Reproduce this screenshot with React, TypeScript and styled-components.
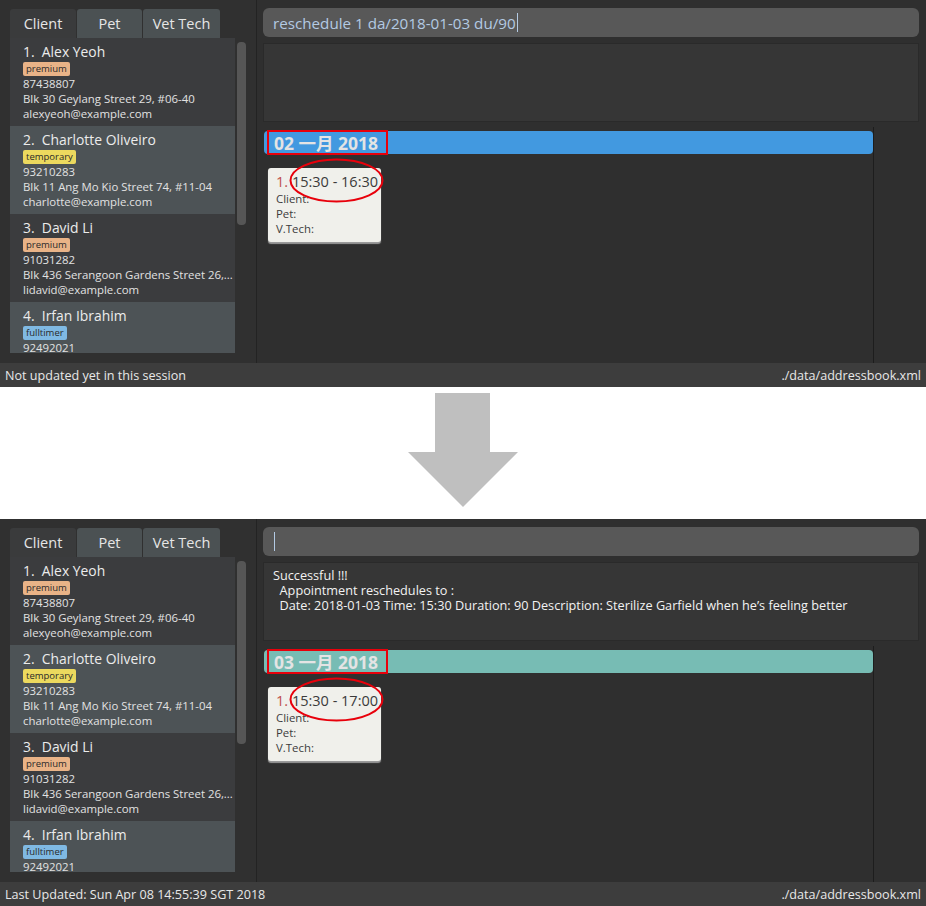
import React from "react";
import styled, { createGlobalStyle } from "styled-components";

const Global = createGlobalStyle`
  html, body { margin: 0; padding: 0; background: #ffffff; }
  body { width: 926px; height: 906px; overflow: hidden; font-family: "Open Sans", "Noto Sans CJK SC", sans-serif; }
`;

const Page = styled.div`
  width: 926px;
  display: flex;
  flex-direction: column;
`;

const Window = styled.div`
  height: 387px;
  display: flex;
  flex-direction: column;
  background: #303030;
`;

const Main = styled.div`
  flex: 1;
  display: flex;
  min-height: 0;
`;

const LeftPane = styled.div`
  width: 257px;
  border-right: 1px solid #232323;
  padding: 9px 0 10px 10px;
  box-sizing: border-box;
  display: flex;
  flex-direction: column;
  background: #303030;
`;

const Tabs = styled.div`
  height: 29px;
  display: flex;
  gap: 1px;
`;

const Tab = styled.div<{ $w: number; $active?: boolean }>`
  width: ${(p) => p.$w}px;
  background: ${(p) => (p.$active ? "#3a3b3c" : "#4b5153")};
  border-radius: 3px 3px 0 0;
  color: #e6e6e6;
  font-size: 14.5px;
  display: flex;
  align-items: center;
  justify-content: center;
`;

const ListRow = styled.div`
  flex: 1;
  display: flex;
  min-height: 0;
`;

const List = styled.div`
  width: 225px;
  overflow: hidden;
  display: flex;
  flex-direction: column;
`;

const Track = styled.div`
  width: 11px;
  padding: 4px 0 0 2px;
  box-sizing: border-box;
`;

const Thumb = styled.div`
  width: 9px;
  height: 183px;
  background: #565656;
  border-radius: 4px;
`;

const Item = styled.div<{ $odd: boolean }>`
  height: 88px;
  flex: none;
  box-sizing: border-box;
  padding: 4px 0 0 13px;
  background: ${(p) => (p.$odd ? "#4d5356" : "#3b3c3e")};
  color: #e2e2e2;
  overflow: hidden;
`;

const Name = styled.div`
  font-size: 13.9px;
  line-height: 19px;
  color: #ececec;
  white-space: pre;
`;

const TagRow = styled.div`
  display: flex;
  margin-top: 1px;
`;

const Tag = styled.span<{ $bg: string }>`
  background: ${(p) => p.$bg};
  color: #2a2a2a;
  font-size: 9.5px;
  line-height: 14px;
  padding: 0 3px;
  border-radius: 2px;
`;

const Detail = styled.div`
  font-size: 11.4px;
  line-height: 15px;
  white-space: nowrap;
  overflow: hidden;
`;

const RightPane = styled.div`
  flex: 1;
  display: flex;
  flex-direction: column;
  padding: 8px 7px 0 6px;
  background: #2f2f2f;
  min-width: 0;
`;

const Command = styled.div`
  height: 29px;
  background: #585858;
  border-radius: 6px;
  display: flex;
  align-items: center;
  padding-left: 10px;
  color: #b3cae3;
  font-size: 15.2px;
`;

const Caret = styled.span`
  display: inline-block;
  width: 1px;
  height: 19px;
  background: #b3cae3;
  margin-left: 1px;
`;

const Result = styled.div`
  margin-top: 6px;
  height: 79px;
  box-sizing: border-box;
  background: #363636;
  border: 1px solid #2a2a2a;
  padding: 5px 9px;
  color: #f2f2f2;
  font-size: 12.7px;
  line-height: 15px;
  white-space: pre;
`;

const Calendar = styled.div`
  position: relative;
  margin-top: 5px;
  width: 611px;
  flex: 1;
  border-right: 1px solid #1d1d1d;
  padding-top: 4px;
  box-sizing: border-box;
`;

const DayHeader = styled.div<{ $bg: string }>`
  margin-left: 1px;
  height: 23px;
  background: ${(p) => p.$bg};
  border-radius: 4px;
  display: flex;
  align-items: center;
  padding-left: 10px;
  color: #e4e4e4;
  font-family: "Open Sans", "Noto Sans CJK SC", sans-serif;
  font-weight: 700;
  font-size: 17.5px;
`;

const Card = styled.div`
  margin: 14px 0 0 5px;
  width: 113px;
  height: 74px;
  box-sizing: border-box;
  background: #f0f0eb;
  border-radius: 3px;
  box-shadow: 0 2px 1px #9a9a9a;
  padding: 4px 0 0 8px;
  color: #3a3a3a;
`;

const CardTitle = styled.div`
  font-size: 14.5px;
  line-height: 19px;
  white-space: pre;
`;

const Num = styled.span`
  color: #c0504d;
`;

const CardLine = styled.div`
  font-size: 11.4px;
  line-height: 15px;
  color: #3c3c3c;
`;

const RedRect = styled.div`
  position: absolute;
  left: 4px;
  top: 3px;
  width: 121px;
  height: 25px;
  box-sizing: border-box;
  border: 2px solid #e8000b;
`;

const RedEllipse = styled.svg`
  position: absolute;
  left: 26px;
  top: 31px;
`;

const StatusBar = styled.div`
  height: 24px;
  flex: none;
  background: #3d3d3d;
  display: flex;
  align-items: center;
  justify-content: space-between;
  padding: 0 5px 0 5px;
  color: #e8e8e8;
  font-size: 12.6px;
`;

const ArrowSection = styled.div`
  height: 132px;
  background: #ffffff;
  display: flex;
  justify-content: center;
  padding-top: 6px;
  box-sizing: border-box;
`;

type Person = {
  n: string;
  tag: string;
  bg: string;
  lines: string[];
};

const people: Person[] = [
  { n: "1.  Alex Yeoh", tag: "premium", bg: "#e9b387", lines: ["87438807", "Blk 30 Geylang Street 29, #06-40", "alexyeoh@example.com"] },
  { n: "2.  Charlotte Oliveiro", tag: "temporary", bg: "#ecd95e", lines: ["93210283", "Blk 11 Ang Mo Kio Street 74, #11-04", "charlotte@example.com"] },
  { n: "3.  David Li", tag: "premium", bg: "#e9b387", lines: ["91031282", "Blk 436 Serangoon Gardens Street 26,...", "lidavid@example.com"] },
  { n: "4.  Irfan Ibrahim", tag: "fulltimer", bg: "#7fb9e3", lines: ["92492021"] },
];

type Props = {
  command: string;
  result: string;
  date: string;
  headerBg: string;
  time: string;
  status: string;
};

function Screen(p: Props) {
  return (
    <Window>
      <Main>
        <LeftPane>
          <Tabs>
            <Tab $w={66} $active>Client</Tab>
            <Tab $w={65}>Pet</Tab>
            <Tab $w={77}>Vet Tech</Tab>
          </Tabs>
          <ListRow>
            <List>
              {people.map((q, i) => (
                <Item key={i} $odd={i % 2 === 1}>
                  <Name>{q.n}</Name>
                  <TagRow>
                    <Tag $bg={q.bg}>{q.tag}</Tag>
                  </TagRow>
                  {q.lines.map((l, j) => (
                    <Detail key={j}>{l}</Detail>
                  ))}
                </Item>
              ))}
            </List>
            <Track>
              <Thumb />
            </Track>
          </ListRow>
        </LeftPane>
        <RightPane>
          <Command>
            {p.command}
            <Caret />
          </Command>
          <Result>{p.result}</Result>
          <Calendar>
            <DayHeader $bg={p.headerBg}>{p.date}</DayHeader>
            <Card>
              <CardTitle>
                <Num>1.</Num> {p.time}
              </CardTitle>
              <CardLine>Client:</CardLine>
              <CardLine>Pet:</CardLine>
              <CardLine>V.Tech:</CardLine>
            </Card>
            <RedRect />
            <RedEllipse width="95" height="45" viewBox="0 0 95 45">
              <ellipse cx="47.5" cy="22.5" rx="46" ry="21" fill="none" stroke="#e8000b" strokeWidth="2" />
            </RedEllipse>
          </Calendar>
        </RightPane>
      </Main>
      <StatusBar>
        <span>{p.status}</span>
        <span>./data/addressbook.xml</span>
      </StatusBar>
    </Window>
  );
}

export default function App() {
  return (
    <Page>
      <Global />
      <Screen
        command="reschedule 1 da/2018-01-03 du/90"
        result=""
        date="02 一月 2018"
        headerBg="#4299e0"
        time="15:30 - 16:30"
        status="Not updated yet in this session"
      />
      <ArrowSection>
        <svg width="110" height="115" viewBox="0 0 110 115">
          <polygon points="27,0 82,0 82,59 110,59 55,114 0,59 27,59" fill="#bfbfbf" />
        </svg>
      </ArrowSection>
      <Screen
        command=""
        result={"Successful !!!\n  Appointment reschedules to :\n  Date: 2018-01-03 Time: 15:30 Duration: 90 Description: Sterilize Garfield when he\u2019s feeling better"}
        date="03 一月 2018"
        headerBg="#77bcb4"
        time="15:30 - 17:00"
        status="Last Updated: Sun Apr 08 14:55:39 SGT 2018"
      />
    </Page>
  );
}
